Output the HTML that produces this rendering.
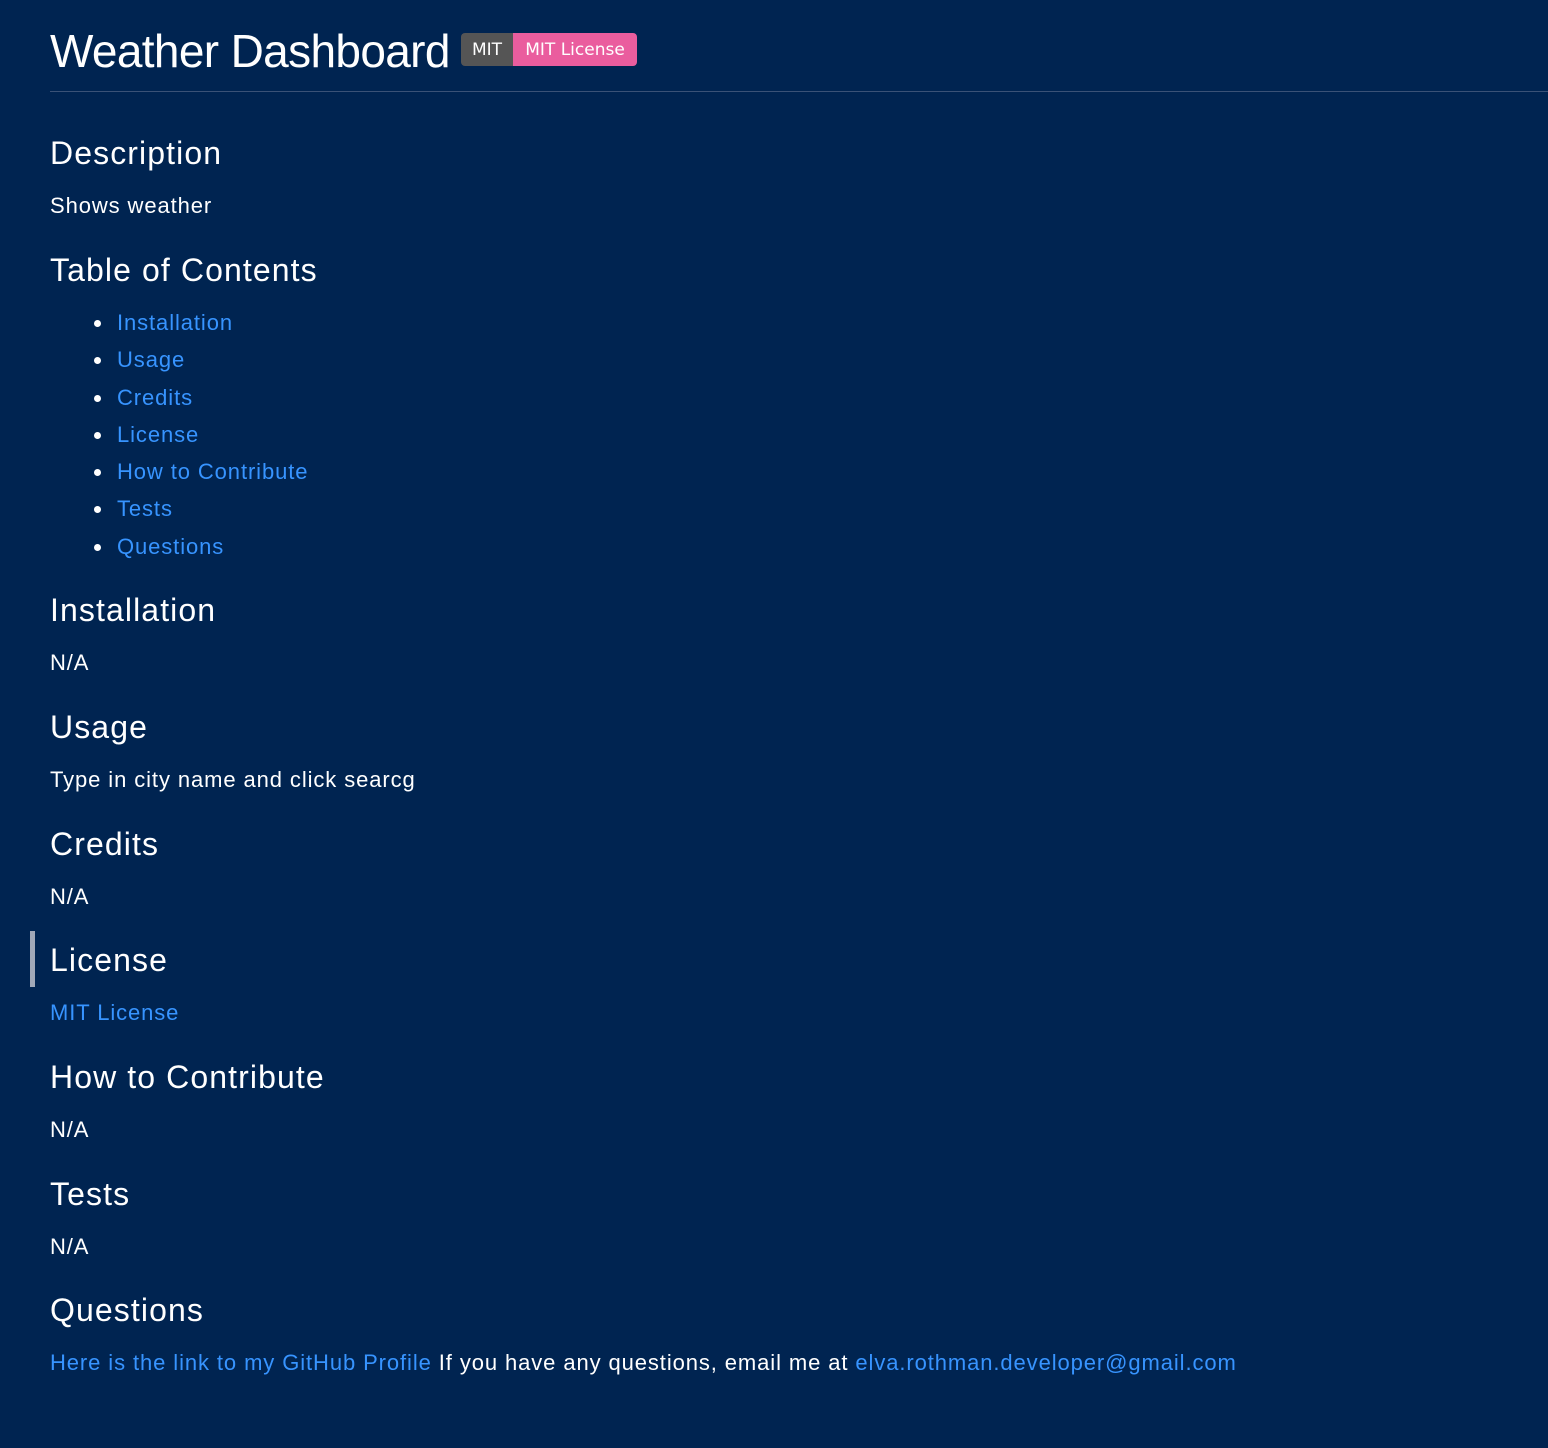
<!DOCTYPE html>
<html><head><meta charset="utf-8"><style>
html,body{margin:0;padding:0;background:#002451;width:1548px;height:1448px;overflow:hidden}
body{position:relative;font-family:"Liberation Sans",sans-serif;color:#fff}
.t{position:absolute;left:50px;white-space:nowrap;line-height:1}
.h1{font-size:46px;letter-spacing:-0.65px}
.h2{font-size:32px;letter-spacing:1.1px}
.p{font-size:22px;letter-spacing:0.9px}
.a{color:#3794ff}
.li{left:117px}
.dot{position:absolute;left:94px;width:7px;height:7px;border-radius:50%;background:#fff}
</style></head><body>
<div class="t h1" style="top:28px">Weather Dashboard</div>
<div style="position:absolute;left:461px;top:33px;width:176px;height:33px;border-radius:4px;overflow:hidden;font-family:'DejaVu Sans',sans-serif;font-size:17px;line-height:34px">
<div style="position:absolute;left:0;top:0;width:52px;height:33px;background:#555;color:#fff;text-align:center">MIT</div>
<div style="position:absolute;left:52px;top:0;width:124px;height:33px;background:#ea5d9e;color:#fff;text-align:center">MIT License</div>
</div>
<div style="position:absolute;left:50px;top:91px;width:1498px;height:1px;background:#3a5277"></div>

<div class="t h2" style="top:137px">Description</div>
<div class="t p" style="top:195px">Shows weather</div>
<div class="t h2" style="top:254px">Table of Contents</div>
<div class="dot" style="top:320px"></div><div class="t p a li" style="top:312px">Installation</div>
<div class="dot" style="top:357px"></div><div class="t p a li" style="top:349px">Usage</div>
<div class="dot" style="top:395px"></div><div class="t p a li" style="top:387px">Credits</div>
<div class="dot" style="top:432px"></div><div class="t p a li" style="top:424px">License</div>
<div class="dot" style="top:469px"></div><div class="t p a li" style="top:461px">How to Contribute</div>
<div class="dot" style="top:506px"></div><div class="t p a li" style="top:498px">Tests</div>
<div class="dot" style="top:544px"></div><div class="t p a li" style="top:536px">Questions</div>

<div class="t h2" style="top:594px">Installation</div>
<div class="t p" style="top:652px">N/A</div>
<div class="t h2" style="top:711px">Usage</div>
<div class="t p" style="top:769px">Type in city name and click searcg</div>
<div class="t h2" style="top:828px">Credits</div>
<div class="t p" style="top:886px">N/A</div>
<div style="position:absolute;left:30px;top:931px;width:5px;height:56px;background:#a0a8b8"></div>
<div class="t h2" style="top:944px">License</div>
<div class="t p a" style="top:1002px">MIT License</div>
<div class="t h2" style="top:1061px">How to Contribute</div>
<div class="t p" style="top:1119px">N/A</div>
<div class="t h2" style="top:1178px">Tests</div>
<div class="t p" style="top:1236px">N/A</div>
<div class="t h2" style="top:1294px">Questions</div>
<div class="t p" style="top:1352px"><span class="a">Here is the link to my GitHub Profile</span> If you have any questions, email me at <span class="a">elva.rothman.developer@gmail.com</span></div>
</body></html>
